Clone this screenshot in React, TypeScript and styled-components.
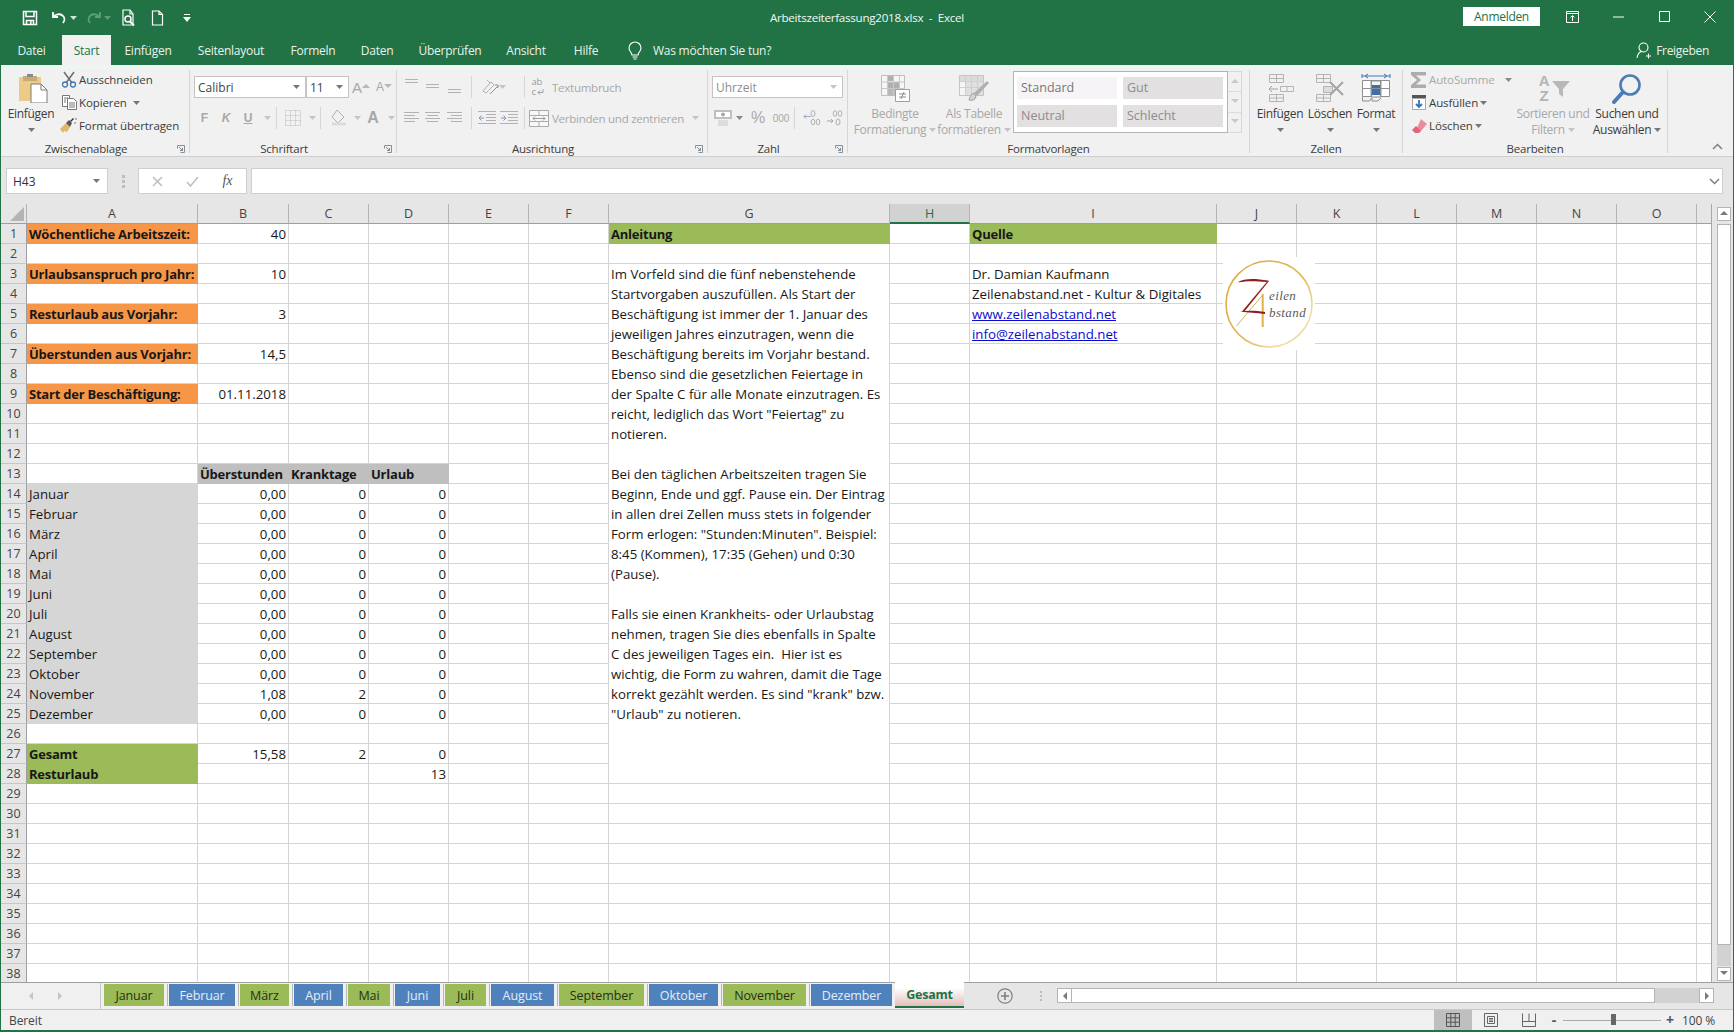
import React from "react";
import styled, { createGlobalStyle } from "styled-components";

const UI = `"Open Sans", "Noto Sans", sans-serif`;
const GREEN = "#217346";
const DIS = "#a8a8a8";

const Global = createGlobalStyle`
  html, body { margin: 0; padding: 0; background: #f0f0f0; overflow: hidden; }
  * { box-sizing: border-box; }
  svg { display: block; flex-shrink: 0; }
`;

const Window = styled.div`
  width: 1734px; height: 1032px; display: flex; flex-direction: column; overflow: hidden;
  border-left: 1px solid ${GREEN}; border-right: 1px solid ${GREEN}; border-bottom: 2px solid ${GREEN};
  font-family: ${UI}; font-size: 11.5px; color: #444; background: #f0f0f0;
`;

/* ---------- title bar ---------- */
const TitleBar = styled.div`
  height: 35px; flex: none; background: ${GREEN}; color: #fff; display: grid; grid-template-columns: 1fr auto 1fr; align-items: center;
`;
const Qat = styled.div`display: flex; align-items: center; padding-left: 20px;`;
const QatSlot = styled.div<{ $w: number; $ml?: number }>`
  width: ${p => p.$w}px; margin-left: ${p => p.$ml || 0}px; display: flex; justify-content: center; align-items: center;
`;
const Title = styled.div`font-size: 11.6px; letter-spacing: -0.25px; color: #f2f7f4;`;
const WinControls = styled.div`display: flex; justify-content: flex-end; align-items: center;`;
const SignIn = styled.div`
  width: 77px; height: 19px; background: #fff; color: ${GREEN}; font-size: 12px; letter-spacing: -0.3px;
  display: flex; align-items: center; justify-content: center; margin-right: 9px; margin-top: -2px;
`;
const WinBtn = styled.div`width: 46px; height: 30px; display: flex; align-items: center; justify-content: center; margin-top: -2px;`;

/* ---------- tabs ---------- */
const TabRow = styled.div`height: 30px; flex: none; background: ${GREEN}; display: flex; align-items: stretch; font-size: 12px;`;
const RibbonTab = styled.div<{ $w: number; $active?: boolean }>`
  width: ${p => p.$w}px; display: flex; align-items: center; justify-content: center; letter-spacing: -0.25px;
  color: ${p => (p.$active ? GREEN : "#eaf2ed")}; background: ${p => (p.$active ? "#f1f1f1" : "transparent")};
`;
const TellMe = styled.div`display: flex; align-items: center; gap: 11px; margin-left: 13px; color: #eaf2ed; letter-spacing: -0.25px;`;
const Share = styled.div`margin-left: auto; margin-right: 24px; display: flex; align-items: center; gap: 4px; color: #eaf2ed; letter-spacing: -0.3px;`;

/* ---------- ribbon ---------- */
const Ribbon = styled.div`
  height: 92px; flex: none; display: flex; padding-top: 5px; border-bottom: 1px solid #cfcfcf; background: linear-gradient(#eef6f1 0, #eef6f1 3px, #f1f1f1 5px);
`;
const Group = styled.div<{ $w: number }>`
  width: ${p => p.$w}px; flex-shrink: 0; height: 83px; border-right: 1px solid #d6d6d6; display: flex; flex-direction: column;
`;
const GroupBody = styled.div<{ $pl?: number }>`height: 71px; flex: none; display: flex; padding-left: ${p => p.$pl || 0}px;`;
const ColumnBody = styled.div<{ $pl?: number }>`
  height: 71px; flex: none; display: flex; flex-direction: column; gap: 9px; padding-top: 6px; padding-left: ${p => p.$pl || 0}px;
`;
const GroupLabel = styled.div`
  height: 16px; flex: none; line-height: 16px; display: flex; color: #3c3c3c; font-size: 11.5px; letter-spacing: -0.2px;
`;
const GroupLabelText = styled.div`flex: 1; text-align: center;`;
const Launcher = styled.div`width: 18px; display: flex; align-items: center; justify-content: flex-end; padding-right: 4px;`;
const BigBtn = styled.div<{ $w: number; $dim?: boolean }>`
  width: ${p => p.$w}px; flex-shrink: 0; display: flex; flex-direction: column; align-items: center; padding-top: 3px; font-size: 12px;
  color: ${p => (p.$dim ? DIS : "#3c3c3c")}; letter-spacing: -0.3px; white-space: nowrap;
`;
const BigIcon = styled.div<{ $ml?: number }>`height: 30px; margin-left: ${p => p.$ml || 0}px; display: flex; align-items: center; justify-content: center; margin-bottom: 3px;`;
const BigLine = styled.div`height: 16px; line-height: 16px; display: flex; align-items: center; gap: 3px;`;
const Stack = styled.div<{ $w: number }>`width: ${p => p.$w}px; flex-shrink: 0; display: flex; flex-direction: column; margin-top: -2px;`;
const SmallBtn = styled.div<{ $dim?: boolean }>`
  height: 23px; display: flex; align-items: center; gap: 2px; white-space: nowrap; letter-spacing: -0.1px;
  color: ${p => (p.$dim ? DIS : "#3c3c3c")};
`;
const SmallIcon = styled.div`width: 16px; display: flex; justify-content: center;`;
const Row = styled.div`height: 22px; display: flex; align-items: center;`;
const Combo = styled.div<{ $w: number; $dim?: boolean }>`
  width: ${p => p.$w}px; height: 22px; background: #fff; border: 1px solid #c4c4c4; display: flex; align-items: center; justify-content: space-between;
  padding: 0 5px 0 3px; color: ${p => (p.$dim ? "#8e8e8e" : "#444")}; flex-shrink: 0; font-size: 12px;
`;
const Slot = styled.div<{ $w: number }>`
  width: ${p => p.$w}px; height: 22px; flex-shrink: 0; display: flex; align-items: center; justify-content: center; color: ${DIS};
`;
const VSep = styled.div<{ $mx?: number }>`width: 1px; height: 22px; background: #d6d6d6; flex-shrink: 0; margin: 0 ${p => p.$mx || 0}px;`;
const FontGlyph = styled.span<{ $size?: number; $weight?: number; $italic?: boolean; $under?: boolean }>`
  font-size: ${p => p.$size || 12}px; font-weight: ${p => p.$weight || 400}; font-style: ${p => (p.$italic ? "italic" : "normal")};
  text-decoration: ${p => (p.$under ? "underline" : "none")}; color: ${DIS}; font-family: "Liberation Sans", sans-serif;
`;
const DimText = styled.span`color: ${DIS}; letter-spacing: -0.25px; white-space: nowrap;`;
const WrapGlyph = styled.div`
  width: 18px; display: flex; flex-direction: column; font-size: 9.5px; line-height: 10px; color: #9c9c9c; padding-left: 2px; letter-spacing: -0.2px;
`;
const WrapLine = styled.div`display: flex; align-items: center; gap: 1px;`;
const SortGlyph = styled.div`width: 34px; height: 30px; display: flex;`;
const SortLetters = styled.div`
  width: 16px; display: flex; flex-direction: column; align-items: center; font: 700 15px/15px "Liberation Sans", sans-serif; color: #b4b4b4;
`;
const FunnelWrap = styled.div`margin-top: 8px;`;
const Gallery = styled.div`
  width: 215px; height: 62px; margin: 1px 0 0 7px; background: #fff; border: 1px solid #b4b4b4; display: grid; grid-template-columns: 100px 100px; grid-template-rows: 22px 22px;
  column-gap: 6px; row-gap: 6px; padding: 5px 0 0 3px; flex-shrink: 0;
`;
const Style = styled.div<{ $light?: boolean; $c?: string }>`
  background: ${p => (p.$light ? "#f6f4f6" : "#e3e0e2")}; color: ${p => p.$c || "#8c8c8c"}; line-height: 22px; padding-left: 4px; font-size: 12.5px;
`;
const GalleryScroll = styled.div`
  width: 14px; height: 62px; margin-top: 1px; border: 1px solid #d8d8d8; border-left: none; display: flex; flex-direction: column; flex-shrink: 0;
`;
const GalleryBtn = styled.div`flex: 1; display: flex; align-items: center; justify-content: center; border-bottom: 1px solid #dcdcdc; &:last-child { border-bottom: none; }`;
const RibbonEnd = styled.div`flex: 1; display: flex; align-items: flex-end; justify-content: flex-end; padding: 0 10px 6px 0;`;

/* ---------- formula bar ---------- */
const FormulaBar = styled.div`height: 47px; flex: none; background: #e6e6e6; display: flex; padding: 11px 10px 10px 5px; align-items: stretch;`;
const NameBox = styled.div`
  width: 102px; background: #fff; border: 1px solid #cfcfcf; display: flex; align-items: center; justify-content: space-between; padding: 0 7px 0 6px; color: #333; font-size: 12px;
`;
const Dots = styled.div`width: 30px; display: flex; align-items: center; justify-content: center;`;
const FxBox = styled.div`
  width: 109px; background: #fff; border: 1px solid #cfcfcf; display: flex; align-items: center; justify-content: space-around; padding: 0 2px;
`;
const FxMark = styled.span`font-family: "Liberation Serif", serif; font-style: italic; font-size: 14px; color: #555;`;
const FormulaInput = styled.div`
  flex: 1; margin-left: 4px; background: #fff; border: 1px solid #cfcfcf; display: flex; align-items: center; justify-content: flex-end; padding-right: 2px;
`;

/* ---------- sheet ---------- */
const SheetRow = styled.div`flex: none; height: 778px; display: flex; background: #e6e6e6;`;
const GridWrap = styled.div`position: relative; width: 1711px; height: 778px; overflow: hidden; border-right: 1px solid #a8a8a8; background: #fff;`;
const Sheet = styled.div`
  display: grid;
  grid-template-columns: 26px 171px 91px 80px 80px 80px 80px 281px 80px 247px 80px 80px 80px 80px 80px 80px 15px;
  grid-template-rows: 20px repeat(38, 20px);
  font-family: ${UI}; font-size: 13.25px; color: #181818;
`;
const Corner = styled.div`background: #e6e6e6; border-right: 1px solid #b4b4b4; border-bottom: 1px solid #9e9e9e; display: flex; align-items: flex-end; justify-content: flex-end; padding: 0 2px 2px 0;`;
const ColHead = styled.div<{ $sel?: boolean }>`
  background: ${p => (p.$sel ? "#d2d2d2" : "#e6e6e6")}; color: ${p => (p.$sel ? GREEN : "#444")};
  border-right: 1px solid #b4b4b4; border-bottom: ${p => (p.$sel ? `2px solid ${GREEN}` : "1px solid #9e9e9e")};
  display: flex; align-items: center; justify-content: center; font-size: 12.5px;
`;
const RowHead = styled.div`
  background: #e6e6e6; color: #444; border-right: 1px solid #9e9e9e; border-bottom: 1px solid #c6c6c6;
  display: flex; align-items: center; justify-content: center; font-size: 12.5px;
`;
const Cell = styled.div<{ $bg?: string; $bold?: boolean; $right?: boolean; $link?: boolean }>`
  background: ${p => p.$bg || "#fff"};
  border-right: 1px solid ${p => p.$bg || "#d4d4d4"}; border-bottom: 1px solid ${p => p.$bg || "#d4d4d4"};
  padding: 0 2px 0 2px; line-height: 20px; white-space: nowrap; overflow: hidden;
  font-weight: ${p => (p.$bold ? 700 : 400)}; text-align: ${p => (p.$right ? "right" : "left")};
  font-size: ${p => (p.$bold ? "13px" : "inherit")}; letter-spacing: ${p => (p.$bold ? "-0.22px" : "0")};
  color: ${p => (p.$link ? "#0b0bcf" : "inherit")}; text-decoration: ${p => (p.$link ? "underline" : "none")};
`;
const Merged = styled.div`
  grid-row: span 26; background: #fff; border-right: 1px solid #d4d4d4; border-bottom: 1px solid #d4d4d4; padding: 0 0 0 2px;
`;
const MergedLine = styled.div`height: 20px; line-height: 20px; white-space: pre;`;
const LogoBox = styled.div`position: absolute; left: 1222px; top: 53px; width: 92px; height: 93px; background: #fff;`;

const VScroll = styled.div`width: 21px; display: flex; flex-direction: column; align-items: center; padding-top: 3px; padding-left: 2px;`;
const ScrollBtn = styled.div`width: 14px; height: 14px; background: #fff; border: 1px solid #b4b4b4; display: flex; align-items: center; justify-content: center; flex-shrink: 0;`;
const VThumb = styled.div`width: 14px; height: 721px; margin: 3px 0 0; background: #fff; border: 1px solid #b4b4b4; flex-shrink: 0;`;
const VTrack = styled.div`flex: 1; width: 14px; background: #d2d2d2; margin-bottom: 1px;`;
const VBottom = styled.div`margin-bottom: 1px;`;

/* ---------- sheet tabs ---------- */
const Strip = styled.div`
  height: 28px; flex: none; display: flex; background: #e6e6e6; border-top: 1px solid #a0a0a0; border-bottom: 1px solid #c8c8c8; padding-top: 1px;
`;
const TabNav = styled.div`width: 100px; display: flex; align-items: center; padding-left: 26px; gap: 21px; background: #f0f0f0; margin-top: -1px; height: 26px; border-right: 1px solid #c8c8c8;`;
const TabList = styled.div`display: flex; padding-left: 3px; background: #f0f0f0; height: 26px; margin-top: -1px; padding-top: 1px;`;
const SheetTab = styled.div<{ $w: number; $blue?: boolean }>`
  width: ${p => p.$w}px; height: 22px; margin-right: 5px; background: ${p => (p.$blue ? "#4f81bd" : "#9bbb59")}; color: ${p => (p.$blue ? "#e4edf7" : "#26300f")};
  display: flex; align-items: center; justify-content: center; box-shadow: 3px 0 0 #f0f0f0, 4px 0 0 #b8b8b8; font-size: 12.5px; letter-spacing: -0.1px;
`;
const ActiveTab = styled.div`
  width: 69px; height: 26px; margin: -2px 0 0 -2px; background: linear-gradient(#fff 25%, #e6bdbd); color: ${GREEN}; font-weight: 700; font-size: 12.5px;
  border-bottom: 2px solid ${GREEN}; display: flex; align-items: center; justify-content: center; letter-spacing: -0.2px;
`;
const AddArea = styled.div`display: flex; align-items: center; height: 24px; margin-left: 33px;`;
const DotsArea = styled.div`display: flex; height: 24px; margin-left: 13px;`;
const HScroll = styled.div`display: flex; margin-left: 1px; margin-top: 4px; height: 15px;`;
const HBtn = styled.div`width: 15px; height: 15px; background: #fff; border: 1px solid #b4b4b4; display: flex; align-items: center; justify-content: center;`;
const HThumb = styled.div`width: 583px; background: #fff; border-top: 1px solid #b4b4b4; border-bottom: 1px solid #b4b4b4; border-right: 1px solid #b4b4b4;`;
const HTrack = styled.div`width: 44px; background: #d2d2d2;`;

/* ---------- status bar ---------- */
const StatusBar = styled.div`flex: 1; min-height: 0; display: flex; align-items: center; background: #f0f0f0; padding-left: 8px; color: #444; letter-spacing: -0.1px; font-size: 12px;`;
const StatusRight = styled.div`margin-left: auto; display: flex; align-items: center; height: 100%;`;
const ViewBtn = styled.div<{ $on?: boolean }>`
  width: 38px; height: 100%; display: flex; align-items: center; justify-content: center; background: ${p => (p.$on ? "#bfbfbf" : "transparent")};
`;
const ZoomMark = styled.div`width: 12px; font-weight: 700; font-size: 14px; color: #555; text-align: center; line-height: 14px;`;
const Slider = styled.div`width: 98px; height: 20px; margin: 0 3px; display: flex; align-items: center; justify-content: center; position: relative;`;
const SliderLine = styled.div`width: 100%; height: 1px; background: #a8a8a8;`;
const SliderThumb = styled.div`position: absolute; width: 5px; height: 11px; background: #666; left: 48px; top: 4px;`;
const ZoomText = styled.div`margin-left: 6px; margin-right: 18px; letter-spacing: -0.1px; color: #444;`;

/* ---------- icons ---------- */
const Caret = ({ c = "#9a9a9a" }: { c?: string }) => (
  <svg width="7" height="4" viewBox="0 0 7 4"><path d="M0 0h7L3.5 4z" fill={c} /></svg>
);
const SaveIcon = () => (
  <svg width="16" height="16" viewBox="0 0 16 16" fill="none" stroke="#fff" strokeWidth="1.5">
    <path d="M1.5 1.5h13v13h-13z" /><path d="M4 1.5v5h8v-5" /><path d="M4.5 14.5v-4h7v4" /><path d="M8.8 11v3" />
  </svg>
);
const UndoIcon = ({ c = "#fff" }: { c?: string }) => (
  <svg width="16" height="14" viewBox="0 0 16 14" fill="none" stroke={c} strokeWidth="1.8">
    <path d="M2 1v5h5" /><path d="M2.5 5.5C5 3 9 2.5 11.5 4.5c2.5 2 2.5 5 .5 7.5" />
  </svg>
);
const RedoIcon = () => (
  <svg width="16" height="14" viewBox="0 0 16 14" fill="none" stroke="#5f9d7c" strokeWidth="1.8">
    <path d="M14 1v5H9" /><path d="M13.5 5.5C11 3 7 2.5 4.5 4.5c-2.5 2-2.5 5-.5 7.5" />
  </svg>
);
const PreviewIcon = () => (
  <svg width="16" height="18" viewBox="0 0 16 18" fill="none" stroke="#fff" strokeWidth="1.2">
    <path d="M9 1H2v15h10V5z" /><path d="M9 1v4h3" />
    <circle cx="7" cy="10" r="3" strokeWidth="1.5" /><path d="M9 12.5l4 4" strokeWidth="2" />
  </svg>
);
const NewIcon = () => (
  <svg width="13" height="16" viewBox="0 0 13 16" fill="none" stroke="#fff" strokeWidth="1.2">
    <path d="M8 1H1.5v14h10V4.5z" /><path d="M8 1v3.5h3.5" />
  </svg>
);
const CustomizeIcon = () => (
  <svg width="8" height="8" viewBox="0 0 8 8" fill="#fff"><path d="M1 0h6v1H1zM0 3h8L4 8z" /></svg>
);
const RibbonDisplayIcon = () => (
  <svg width="13" height="12" viewBox="0 0 13 12" fill="none" stroke="#fff"><path d="M.5.5h12v11H.5zM.5 2.5h12" /><path d="M6.5 10V5M4.5 6.5l2-2 2 2" /></svg>
);
const Bulb = () => (
  <svg width="14" height="19" viewBox="0 0 14 19" fill="none" stroke="#fff" strokeWidth="1.1">
    <path d="M7 1a6 6 0 0 0-6 6c0 2.5 1.5 3.5 2.3 5 .4.8.5 1.5.6 2h6.2c.1-.5.2-1.2.6-2C11.5 10.500 13 9.500 13 7a6 6 0 0 0-6-6z" /><path d="M4.500 16h5M5.500 18h3" />
  </svg>
);
const UserPlus = () => (
  <svg width="16" height="17" viewBox="0 0 16 17" fill="none" stroke="#fff" strokeWidth="1.1">
    <circle cx="7.500" cy="5.500" r="4.500" /><path d="M1 16c.5-3.500 2.500-6 4.500-6.500M10 14h5M12.500 11.500v5" />
  </svg>
);
const PasteIcon = () => (
  <svg width="30" height="30" viewBox="0 0 30 30">
    <path d="M1 4h22v24H1z" fill="#eccb88" />
    <path d="M5 3h14v5H5z" fill="#c7ab74" /><path d="M9 1h6v3H9z" fill="#8a8a8a" />
    <path d="M13 11h10l6 6v13H13z" fill="#fff" stroke="#7a7a7a" /><path d="M23 11v6h6" fill="none" stroke="#7a7a7a" />
  </svg>
);
const ScissorsIcon = () => (
  <svg width="16" height="17" viewBox="0 0 16 17" fill="none">
    <path d="M3 1l8 11M13 1L5 12" stroke="#6d6d6d" strokeWidth="1.5" />
    <circle cx="4" cy="13.500" r="2.500" stroke="#3f78b4" strokeWidth="1.3" /><circle cx="12" cy="13.500" r="2.500" stroke="#3f78b4" strokeWidth="1.3" />
  </svg>
);
const CopyIcon = () => (
  <svg width="15" height="15" viewBox="0 0 15 15" fill="#fff" stroke="#777">
    <path d="M.5.5h7v11h-7z" /><path d="M5.500 3.500h6l3 3v8h-9z" /><path d="M7 8h6M7 10h6M7 12h6M2 3h4M2 5h2M2 7h2" fill="none" />
  </svg>
);
const BrushIcon = () => (
  <svg width="18" height="15" viewBox="0 0 18 15">
    <path d="M0 11l6-6 4 4-3 5-3-1-1 2z" fill="#e2b76a" /><path d="M6 5l3-3 3 3-2 4z" fill="#5a5a5a" /><path d="M10 3l3-3 1 1-3 3z" fill="#333" />
    <path d="M15 1l1 1 1-1-1-1zM14 5l1 1 1-1-1-1z" fill="#777" />
  </svg>
);
const Launch = () => (
  <svg width="8" height="8" viewBox="0 0 8 8" fill="none" stroke="#8e8e8e"><path d="M.5 3.500V.5h7v7H3.500" /><path d="M2 2l3.500 3.500M3 5.500h2.500V3" stroke="#7a8ea0" /></svg>
);
const LineStack = ({ off, align }: { off: number; align: "l" | "c" | "r" | "n" }) => {
  const ls = align === "n"
    ? [[0, 13], [0, 13]]
    : align === "l" ? [[0, 15], [0, 11], [0, 15], [0, 11]]
    : align === "c" ? [[0, 15], [2, 13], [0, 15], [2, 13]]
    : [[0, 15], [4, 15], [0, 15], [4, 15]];
  return (
    <svg width="16" height="18" viewBox="0 0 16 18" stroke="#b2b2b2">
      {ls.map((l, i) => <path key={i} d={`M${l[0] + (align === "n" ? 1 : 0)} ${off + i * 3 + 0.5}H${l[1] + (align === "n" ? 1 : 0)}`} />)}
    </svg>
  );
};
const OrientIcon = () => (
  <svg width="17" height="17" viewBox="0 0 17 17" fill="none" stroke="#b0b0b0"><path d="M1 12L9 3l3 3-8 8zM5 1l3 3" /><path d="M8 15l8-8M13 6h3v3" stroke="#8f8f8f" /></svg>
);
const IndentIcon = ({ dir }: { dir: "l" | "r" }) => (
  <svg width="19" height="14" viewBox="0 0 19 14" fill="none" stroke="#b2b2b2">
    <path d="M0 .5h18M8 3.500h10M8 6.500h10M8 9.500h10M0 12.500h18" />
    <path d={dir === "l" ? "M6 7H1M3.500 4.500L1 7l2.500 2.500" : "M1 7h5M3.500 4.500L6 7 3.500 9.500"} stroke="#7c9bbc" />
  </svg>
);
const MergeIcon = () => (
  <svg width="20" height="17" viewBox="0 0 20 17" fill="#f8f8f8" stroke="#ababab"><path d="M.5.5h19v16H.5z" /><path d="M.5 5.500h19M.5 11.500h19M10 .5v5M10 11.500v5" fill="none" /><path d="M4 8.500h12M6 6.500l-2 2 2 2M14 6.500l2 2-2 2" fill="none" stroke="#9b9b9b" /></svg>
);
const MoneyIcon = () => (
  <svg width="18" height="17" viewBox="0 0 18 17"><path d="M0 0h18v9H0z" fill="#bfbfbf" /><path d="M2 2h14v5H2z" fill="#fff" /><circle cx="9" cy="4.500" r="2" fill="#a8a8a8" /><path d="M4 11h10M4 13h10M4 15h10" stroke="#c8c8c8" /></svg>
);
const DecIcon = ({ more }: { more?: boolean }) => (
  <svg width="18" height="16" viewBox="0 0 18 16" fill="none" stroke="#a8a8a8" strokeWidth="0.9">
    {more ? (
      <><path d="M1 6.500h6M3 4.500l-2 2 2 2" stroke="#8aa4bd" /><ellipse cx="10" cy="3.500" rx="2" ry="3" /><path d="M7.500 6v.9" /><ellipse cx="10" cy="12" rx="1.800" ry="2.800" /><ellipse cx="15" cy="12" rx="1.800" ry="2.800" /></>
    ) : (
      <><ellipse cx="9" cy="3.500" rx="1.800" ry="2.800" /><ellipse cx="14" cy="3.500" rx="1.800" ry="2.800" /><path d="M1 11h6M5 9l2 2-2 2" stroke="#8aa4bd" /><ellipse cx="12" cy="12" rx="2" ry="3" /></>
    )}
  </svg>
);
const CondIcon = () => (
  <svg width="29" height="27" viewBox="0 0 29 27">
    <path d="M.5.5h23v20H.5z" fill="#f6f6f6" stroke="#bdbdbd" />
    <path d="M7 1h5v5H7z" fill="#b0b0b0" /><path d="M7 7h11v6H7z" fill="#b0b0b0" /><path d="M7 14h8v6H7z" fill="#b8b8b8" />
    <path d="M.5 7h23M.5 13.500h23M6.500.5v20M12.500.5v20M18.500.5v20" stroke="#c8c8c8" fill="none" />
    <path d="M14.500 14.500h14v12h-14z" fill="#fff" stroke="#a0a0a0" /><path d="M18 19h7M18 22h7M23 17l-3 7" stroke="#8f8f8f" fill="none" />
  </svg>
);
const TableIcon = () => (
  <svg width="30" height="27" viewBox="0 0 30 27">
    <path d="M.5.5h24v20H.5z" fill="#f6f6f6" stroke="#c4c4c4" />
    <path d="M1 1h23v5H1z" fill="#dcdcdc" /><path d="M7 7h17v13H7z" fill="#e0e0e0" />
    <path d="M.5 6.500h24M.5 12.500h24M6.500.5v20M12.500.5v20M18.500.5v20" stroke="#cfcfcf" fill="none" />
    <path d="M28 6l2 2-12 13-3-3z" fill="#b0b0b0" /><path d="M15 18c-3 1-4 3-5 7 3 1 6 0 7-3z" fill="#d2d2d2" stroke="#a0a0a0" />
  </svg>
);
const InsertIcon = () => (
  <svg width="28" height="28" viewBox="0 0 28 28" fill="none" stroke="#b4b4b4">
    <path d="M3.500.5h14v8h-14zM10.500.5v8M3.500 4.500h14" /><path d="M14.500 12.500h13v5h-13zM21 12.500v5" />
    <path d="M3 15h9M6 12l-3 3 3 3" stroke="#a0a0a0" />
    <path d="M3.500 20.500h14v7h-14zM10.500 20.500v7M3.500 24h14" />
  </svg>
);
const DeleteIcon = () => (
  <svg width="30" height="28" viewBox="0 0 30 28" fill="none" stroke="#b4b4b4">
    <path d="M1.500.5h14v8h-14zM8.500.5v8M1.500 4.500h14" /><path d="M8.500 12.500h9v6h-9z" fill="#dcdcdc" />
    <path d="M1.500 20.500h14v7h-14zM8.500 20.500v7M1.500 24h14" />
    <path d="M15 8l13 13M28 8L15 21" stroke="#a4a4a4" strokeWidth="2" />
  </svg>
);
const FormatIcon = () => (
  <svg width="30" height="30" viewBox="0 0 30 30" fill="none" stroke="#8f8f8f">
    <path d="M1 3h28M1 1v4M29 1v4" stroke="#3f78b4" />
    <path d="M4 3l3-2M4 3l3 2M26 3l-3-2M26 3l-3 2" stroke="#3f78b4" />
    <path d="M1.500 7.500h27v16h-27z" fill="#fff" /><path d="M10 8h10v16H10z" fill="#f4f4f4" />
    <path d="M11 12h8v10h-8z" fill="#3f6fa8" stroke="none" />
    <path d="M1.500 15.500h27M10.500 7.500v16M19.500 7.500v16" />
    <path d="M1.500 24v4h7l2-3M11 25v3h6l3-3" />
  </svg>
);
const SigmaIcon = () => (
  <svg width="16" height="16" viewBox="0 0 16 16"><path d="M0 0h15v3.500H5L10 8l-5 4.500h10V16H0v-3l6-5-6-5z" fill="#adadad" /></svg>
);
const FillIcon = () => (
  <svg width="14" height="15" viewBox="0 0 14 15"><path d="M0 0h14v3H0z" fill="#555" /><path d="M.5 3.500h13v11H.5z" fill="#fff" stroke="#a8a8a8" /><path d="M7 5v7M4 9l3 3 3-3" stroke="#2e75b6" strokeWidth="1.800" fill="none" /></svg>
);
const EraserIcon = () => (
  <svg width="15" height="14" viewBox="0 0 15 14"><path d="M9 0l6 5-6 7-5-1z" fill="#e88da0" /><path d="M4 7l5 5-2 2H3L0 11z" fill="#e0647c" /></svg>
);
const Funnel = () => (
  <svg width="18" height="16" viewBox="0 0 18 16"><path d="M0 0h18l-7 8v8l-4-3V8z" fill="#b8b8b8" /></svg>
);
const SearchIcon = () => (
  <svg width="30" height="31" viewBox="0 0 30 31" fill="none">
    <circle cx="18" cy="12" r="9.500" stroke="#4a7cb5" strokeWidth="2.600" />
    <path d="M11 19L2 29" stroke="#4a7cb5" strokeWidth="4" strokeLinecap="round" />
  </svg>
);
const Chevron = ({ up }: { up?: boolean }) => (
  <svg width="11" height="7" viewBox="0 0 11 7" fill="none" stroke="#7f7f7f" strokeWidth="1.500"><path d={up ? "M1 6l4.500-4.500L10 6" : "M1 1l4.500 4.500L10 1"} /></svg>
);
const Tri = ({ dir, c = "#7a7a7a" }: { dir: "u" | "d" | "l" | "r"; c?: string }) => {
  const d = { u: "M0 5L4 1l4 4z", d: "M0 1l4 4 4-4z", l: "M6 0v8L2 4z", r: "M2 0v8l4-4z" }[dir];
  return <svg width="8" height="8" viewBox="0 0 8 8"><path d={d} fill={c} /></svg>;
};
const CornerTri = () => (
  <svg width="14" height="14" viewBox="0 0 14 14"><path d="M14 0v14H0z" fill="#b4b4b4" /></svg>
);
const Logo = () => (
  <svg width="92" height="93" viewBox="0 0 92 93" fill="none">
    <defs>
      <linearGradient id="ring" x1="0" y1="0" x2="1" y2="1">
        <stop offset="0" stopColor="#d9a93a" /><stop offset="0.55" stopColor="#e2b95a" /><stop offset="0.82" stopColor="#f2dfb0" /><stop offset="1" stopColor="#e2b95a" />
      </linearGradient>
    </defs>
    <circle cx="46" cy="47" r="43" stroke="url(#ring)" strokeWidth="1.600" />
    <path d="M39.700 37v33" stroke="#e0b24a" strokeWidth="2" />
    <path d="M39.700 38L13.500 69" stroke="#e0b24a" strokeWidth="1" />
    <path d="M15 25c6-4 18-3.500 30-1.500l-1 1.500c-10-.8-16-1-22-.4-3 .3-5 1-7 .4z" fill="#8f1d1d" />
    <path d="M45 23.500L19 54.500l2 .5L46 24z" fill="#8f1d1d" />
    <path d="M17 54.500c8-1.200 17-.6 25 .5v2c-9-1-16-1.200-25-2.500z" fill="#8f1d1d" />
    <text x="46" y="42.500" fontFamily="Liberation Serif" fontStyle="italic" fontSize="13" letterSpacing="0.4" fill="#5c5c5c">eilen</text>
    <text x="46" y="60" fontFamily="Liberation Serif" fontStyle="italic" fontSize="13" letterSpacing="0.4" fill="#5c5c5c">bstand</text>
  </svg>
);

/* ---------- data ---------- */
const COLS = ["A", "B", "C", "D", "E", "F", "G", "H", "I", "J", "K", "L", "M", "N", "O", ""];
const ORANGE = "#f79646";
const LIME = "#9bbb59";
const GREY = "#d6d6d6";
const DGREY = "#bfbfbf";
type CellData = { t?: string; bg?: string; bold?: boolean; right?: boolean; link?: boolean };
const data: Record<string, CellData> = {
  A1: { t: "Wöchentliche Arbeitszeit:", bg: ORANGE, bold: true }, B1: { t: "40", right: true },
  A3: { t: "Urlaubsanspruch pro Jahr:", bg: ORANGE, bold: true }, B3: { t: "10", right: true },
  A5: { t: "Resturlaub aus Vorjahr:", bg: ORANGE, bold: true }, B5: { t: "3", right: true },
  A7: { t: "Überstunden aus Vorjahr:", bg: ORANGE, bold: true }, B7: { t: "14,5", right: true },
  A9: { t: "Start der Beschäftigung:", bg: ORANGE, bold: true }, B9: { t: "01.11.2018", right: true },
  B13: { t: "Überstunden", bg: DGREY, bold: true }, C13: { t: "Kranktage", bg: DGREY, bold: true }, D13: { t: "Urlaub", bg: DGREY, bold: true },
  A27: { t: "Gesamt", bg: LIME, bold: true }, B27: { t: "15,58", right: true }, C27: { t: "2", right: true }, D27: { t: "0", right: true },
  A28: { t: "Resturlaub", bg: LIME, bold: true }, D28: { t: "13", right: true },
  G1: { t: "Anleitung", bg: LIME, bold: true }, I1: { t: "Quelle", bg: LIME, bold: true },
  I3: { t: "Dr. Damian Kaufmann" }, I4: { t: "Zeilenabstand.net - Kultur & Digitales" },
  I5: { t: "www.zeilenabstand.net", link: true }, I6: { t: "info@zeilenabstand.net", link: true },
};
["Januar", "Februar", "März", "April", "Mai", "Juni", "Juli", "August", "September", "Oktober", "November", "Dezember"].forEach((m, i) => {
  const r = 14 + i;
  const nov = m === "November";
  data[`A${r}`] = { t: m, bg: GREY };
  data[`B${r}`] = { t: nov ? "1,08" : "0,00", right: true };
  data[`C${r}`] = { t: nov ? "2" : "0", right: true };
  data[`D${r}`] = { t: "0", right: true };
});
const notes = [
  "Im Vorfeld sind die fünf nebenstehende", "Startvorgaben auszufüllen. Als Start der", "Beschäftigung ist immer der 1. Januar des",
  "jeweiligen Jahres einzutragen, wenn die", "Beschäftigung bereits im Vorjahr bestand.", "Ebenso sind die gesetzlichen Feiertage in",
  "der Spalte C für alle Monate einzutragen. Es", "reicht, lediglich das Wort \"Feiertag\" zu", "notieren.", " ",
  "Bei den täglichen Arbeitszeiten tragen Sie", "Beginn, Ende und ggf. Pause ein. Der Eintrag", "in allen drei Zellen muss stets in folgender",
  "Form erlogen: \"Stunden:Minuten\". Beispiel:", "8:45 (Kommen), 17:35 (Gehen) und 0:30", "(Pause).", " ",
  "Falls sie einen Krankheits- oder Urlaubstag", "nehmen, tragen Sie dies ebenfalls in Spalte", "C des jeweiligen Tages ein.  Hier ist es",
  "wichtig, die Form zu wahren, damit die Tage", "korrekt gezählt werden. Es sind \"krank\" bzw.", "\"Urlaub\" zu notieren.",
];
const tabs = [
  ["Januar", 60, 0], ["Februar", 66, 1], ["März", 49, 0], ["April", 49, 1], ["Mai", 42, 0], ["Juni", 45, 1], ["Juli", 41, 0],
  ["August", 63, 1], ["September", 85, 0], ["Oktober", 69, 1], ["November", 83, 0], ["Dezember", 81, 1],
] as const;
const ribbonTabs: [string, number][] = [["Datei", 61], ["Start", 49], ["Einfügen", 74], ["Seitenlayout", 92], ["Formeln", 72], ["Daten", 56], ["Überprüfen", 90], ["Ansicht", 62], ["Hilfe", 58]];

const renderRow = (r: number) => {
  const out: React.ReactNode[] = [<RowHead key={`h${r}`}>{r}</RowHead>];
  COLS.forEach(c => {
    const k = `${c || "P"}${r}`;
    if (c === "G" && r === 3) {
      out.push(<Merged key={k}>{notes.map((n, j) => <MergedLine key={j}>{n}</MergedLine>)}</Merged>);
      return;
    }
    if (c === "G" && r > 3 && r <= 28) return;
    const d = data[k] || {};
    out.push(<Cell key={k} $bg={d.bg} $bold={d.bold} $right={d.right} $link={d.link}>{d.t}</Cell>);
  });
  return out;
};

export default function App() {
  return (
    <Window>
      <Global />
      <TitleBar>
        <Qat>
          <QatSlot $w={18}><SaveIcon /></QatSlot>
          <QatSlot $w={16} $ml={12}><UndoIcon /></QatSlot>
          <QatSlot $w={12}><Caret c="#cfe3d8" /></QatSlot>
          <QatSlot $w={16} $ml={7}><RedoIcon /></QatSlot>
          <QatSlot $w={10}><Caret c="#5f9d7c" /></QatSlot>
          <QatSlot $w={16} $ml={9}><PreviewIcon /></QatSlot>
          <QatSlot $w={16} $ml={12}><NewIcon /></QatSlot>
          <QatSlot $w={16} $ml={14}><CustomizeIcon /></QatSlot>
        </Qat>
        <Title>Arbeitszeiterfassung2018.xlsx&nbsp; -&nbsp; Excel</Title>
        <WinControls>
          <SignIn>Anmelden</SignIn>
          <WinBtn><RibbonDisplayIcon /></WinBtn>
          <WinBtn><svg width="11" height="2" viewBox="0 0 11 2"><path d="M0 1h11" stroke="#fff" /></svg></WinBtn>
          <WinBtn><svg width="11" height="11" viewBox="0 0 11 11"><path d="M.5.5h10v10H.5z" stroke="#fff" fill="none" /></svg></WinBtn>
          <WinBtn><svg width="12" height="12" viewBox="0 0 12 12"><path d="M.5.5l11 11M11.500.5l-11 11" stroke="#fff" /></svg></WinBtn>
        </WinControls>
      </TitleBar>

      <TabRow>
        {ribbonTabs.map(([t, w]) => <RibbonTab key={t} $w={w} $active={t === "Start"}>{t}</RibbonTab>)}
        <TellMe><Bulb />Was möchten Sie tun?</TellMe>
        <Share><UserPlus />Freigeben</Share>
      </TabRow>

      <Ribbon>
        <Group $w={189}>
          <GroupBody>
            <BigBtn $w={60}>
              <BigIcon $ml={3}><PasteIcon /></BigIcon>
              <BigLine>Einfügen</BigLine>
              <BigLine><Caret c="#777" /></BigLine>
            </BigBtn>
            <Stack $w={128}>
              <SmallBtn><SmallIcon><ScissorsIcon /></SmallIcon>Ausschneiden</SmallBtn>
              <SmallBtn><SmallIcon><CopyIcon /></SmallIcon>Kopieren<Slot $w={16}><Caret c="#777" /></Slot></SmallBtn>
              <SmallBtn><SmallIcon><BrushIcon /></SmallIcon>Format übertragen</SmallBtn>
            </Stack>
          </GroupBody>
          <GroupLabel><GroupLabelText>Zwischenablage</GroupLabelText><Launcher><Launch /></Launcher></GroupLabel>
        </Group>

        <Group $w={207}>
          <ColumnBody $pl={4}>
            <Row>
              <Combo $w={112}>Calibri<Caret c="#777" /></Combo>
              <Combo $w={43}>11<Caret c="#777" /></Combo>
              <Slot $w={24}><FontGlyph $size={15}>A</FontGlyph><Tri dir="u" c="#b8b8b8" /></Slot>
              <Slot $w={22}><FontGlyph $size={12}>A</FontGlyph><Tri dir="d" c="#b8b8b8" /></Slot>
            </Row>
            <Row>
              <Slot $w={21}><FontGlyph $weight={700}>F</FontGlyph></Slot>
              <Slot $w={22}><FontGlyph $weight={700} $italic>K</FontGlyph></Slot>
              <Slot $w={22}><FontGlyph $weight={700} $under>U</FontGlyph></Slot>
              <Slot $w={16}><Caret c="#c4c4c4" /></Slot>
              <VSep $mx={1} />
              <Slot $w={30}><svg width="16" height="16" viewBox="0 0 16 16" fill="none" stroke="#bdbdbd" strokeDasharray="1 1"><path d="M.5.5h15v15H.5zM.5 5.500h15M.5 10.500h15M5.500.5v15M10.500.5v15" /></svg></Slot>
              <Slot $w={8}><Caret c="#c4c4c4" /></Slot>
              <VSep $mx={4} />
              <Slot $w={27}><svg width="18" height="18" viewBox="0 0 18 18" fill="none" stroke="#b0b0b0"><path d="M7 1l7 7-6 6-6-6z" /><path d="M2 15h14" stroke="#dcdcdc" strokeWidth="3" /></svg></Slot>
              <Slot $w={10}><Caret c="#c4c4c4" /></Slot>
              <Slot $w={22}><FontGlyph $size={16} $weight={700}>A</FontGlyph></Slot>
              <Slot $w={14}><Caret c="#c4c4c4" /></Slot>
            </Row>
          </ColumnBody>
          <GroupLabel><GroupLabelText>Schriftart</GroupLabelText><Launcher><Launch /></Launcher></GroupLabel>
        </Group>

        <Group $w={311}>
          <ColumnBody $pl={5}>
            <Row>
              <Slot $w={20}><LineStack off={1} align="n" /></Slot>
              <Slot $w={21}><LineStack off={6} align="n" /></Slot>
              <Slot $w={23}><LineStack off={11} align="n" /></Slot>
              <VSep $mx={5} />
              <Slot $w={33}><OrientIcon /><Caret c="#c4c4c4" /></Slot>
              <Slot $w={14} />
              <VSep />
              <Slot $w={27}>
                <WrapGlyph>
                  <div>ab</div>
                  <WrapLine>c<svg width="7" height="6" viewBox="0 0 7 6" fill="none" stroke="#a0a0a0"><path d="M6 0v3.500H1M3 1.500L1 3.500l2 2" /></svg></WrapLine>
                </WrapGlyph>
              </Slot>
              <DimText>Textumbruch</DimText>
            </Row>
            <Row>
              <Slot $w={20}><LineStack off={3} align="l" /></Slot>
              <Slot $w={21}><LineStack off={3} align="c" /></Slot>
              <Slot $w={23}><LineStack off={3} align="r" /></Slot>
              <VSep $mx={5} />
              <Slot $w={1} />
              <Slot $w={19}><IndentIcon dir="l" /></Slot>
              <Slot $w={3} />
              <Slot $w={19}><IndentIcon dir="r" /></Slot>
              <Slot $w={5} />
              <VSep />
              <Slot $w={27}><MergeIcon /></Slot>
              <DimText>Verbinden und zentrieren</DimText>
              <Slot $w={24}><Caret c="#c4c4c4" /></Slot>
            </Row>
          </ColumnBody>
          <GroupLabel><GroupLabelText>Ausrichtung</GroupLabelText><Launcher><Launch /></Launcher></GroupLabel>
        </Group>

        <Group $w={140}>
          <ColumnBody $pl={4}>
            <Row><Combo $w={131} $dim>Uhrzeit<Caret c="#c4c4c4" /></Combo></Row>
            <Row>
              <Slot $w={21}><MoneyIcon /></Slot>
              <Slot $w={12}><Caret c="#8a8a8a" /></Slot>
              <Slot $w={26}><FontGlyph $size={16}>%</FontGlyph></Slot>
              <Slot $w={20}><FontGlyph $size={10}>000</FontGlyph></Slot>
              <VSep $mx={3} />
              <Slot $w={28}><DecIcon more /></Slot>
              <Slot $w={18}><DecIcon /></Slot>
            </Row>
          </ColumnBody>
          <GroupLabel><GroupLabelText>Zahl</GroupLabelText><Launcher><Launch /></Launcher></GroupLabel>
        </Group>

        <Group $w={402}>
          <GroupBody>
            <BigBtn $w={94} $dim>
              <BigIcon><CondIcon /></BigIcon>
              <BigLine>Bedingte</BigLine>
              <BigLine>Formatierung<Caret c="#c4c4c4" /></BigLine>
            </BigBtn>
            <BigBtn $w={64} $dim>
              <BigIcon><TableIcon /></BigIcon>
              <BigLine>Als Tabelle</BigLine>
              <BigLine>formatieren<Caret c="#c4c4c4" /></BigLine>
            </BigBtn>
            <Gallery>
              <Style $light $c="#777">Standard</Style>
              <Style>Gut</Style>
              <Style>Neutral</Style>
              <Style>Schlecht</Style>
            </Gallery>
            <GalleryScroll>
              <GalleryBtn><Tri dir="u" c="#c8c8c8" /></GalleryBtn>
              <GalleryBtn><Tri dir="d" c="#c8c8c8" /></GalleryBtn>
              <GalleryBtn><Tri dir="d" c="#c8c8c8" /></GalleryBtn>
            </GalleryScroll>
          </GroupBody>
          <GroupLabel><GroupLabelText>Formatvorlagen</GroupLabelText></GroupLabel>
        </Group>

        <Group $w={153}>
          <GroupBody>
            <BigBtn $w={60}>
              <BigIcon><InsertIcon /></BigIcon>
              <BigLine>Einfügen</BigLine>
              <BigLine><Caret c="#777" /></BigLine>
            </BigBtn>
            <BigBtn $w={40}>
              <BigIcon><DeleteIcon /></BigIcon>
              <BigLine>Löschen</BigLine>
              <BigLine><Caret c="#777" /></BigLine>
            </BigBtn>
            <BigBtn $w={52}>
              <BigIcon><FormatIcon /></BigIcon>
              <BigLine>Format</BigLine>
              <BigLine><Caret c="#777" /></BigLine>
            </BigBtn>
          </GroupBody>
          <GroupLabel><GroupLabelText>Zellen</GroupLabelText></GroupLabel>
        </Group>

        <Group $w={265}>
          <GroupBody $pl={8}>
            <Stack $w={115}>
              <SmallBtn $dim><SmallIcon><SigmaIcon /></SmallIcon>AutoSumme<Slot $w={24}><Caret c="#8a8a8a" /></Slot></SmallBtn>
              <SmallBtn><SmallIcon><FillIcon /></SmallIcon>Ausfüllen<Caret c="#777" /></SmallBtn>
              <SmallBtn><SmallIcon><EraserIcon /></SmallIcon>Löschen<Caret c="#777" /></SmallBtn>
            </Stack>
            <BigBtn $w={54} $dim>
              <BigIcon>
                <SortGlyph>
                  <SortLetters><div>A</div><div>Z</div></SortLetters>
                  <FunnelWrap><Funnel /></FunnelWrap>
                </SortGlyph>
              </BigIcon>
              <BigLine>Sortieren und</BigLine>
              <BigLine>Filtern<Caret c="#c4c4c4" /></BigLine>
            </BigBtn>
            <BigBtn $w={94}>
              <BigIcon><SearchIcon /></BigIcon>
              <BigLine>Suchen und</BigLine>
              <BigLine>Auswählen<Caret c="#777" /></BigLine>
            </BigBtn>
          </GroupBody>
          <GroupLabel><GroupLabelText>Bearbeiten</GroupLabelText></GroupLabel>
        </Group>

        <RibbonEnd><Chevron up /></RibbonEnd>
      </Ribbon>

      <FormulaBar>
        <NameBox>H43<Caret c="#777" /></NameBox>
        <Dots><svg width="3" height="13" viewBox="0 0 3 13" fill="#bdbdbd"><path d="M0 0h3v3H0zM0 5h3v3H0zM0 10h3v3H0z" /></svg></Dots>
        <FxBox>
          <svg width="11" height="11" viewBox="0 0 11 11" stroke="#bdbdbd" strokeWidth="1.500"><path d="M1 1l9 9M10 1l-9 9" /></svg>
          <svg width="13" height="11" viewBox="0 0 13 11" fill="none" stroke="#bdbdbd" strokeWidth="1.500"><path d="M1 6l3.500 4L12 1" /></svg>
          <FxMark>fx</FxMark>
        </FxBox>
        <FormulaInput><Chevron /></FormulaInput>
      </FormulaBar>

      <SheetRow>
        <GridWrap>
          <Sheet>
            <Corner><CornerTri /></Corner>
            {COLS.map((c, i) => <ColHead key={i} $sel={c === "H"}>{c}</ColHead>)}
            {Array.from({ length: 38 }, (_, i) => renderRow(i + 1))}
          </Sheet>
          <LogoBox><Logo /></LogoBox>
        </GridWrap>
        <VScroll>
          <ScrollBtn><Tri dir="u" /></ScrollBtn>
          <VThumb />
          <VTrack />
          <VBottom><ScrollBtn><Tri dir="d" /></ScrollBtn></VBottom>
        </VScroll>
      </SheetRow>

      <Strip>
        <TabNav><Tri dir="l" c="#c4c4c4" /><Tri dir="r" c="#c4c4c4" /></TabNav>
        <TabList>
          {tabs.map(([t, w, blue]) => <SheetTab key={t} $w={w} $blue={!!blue}>{t}</SheetTab>)}
          <ActiveTab>Gesamt</ActiveTab>
        </TabList>
        <AddArea>
          <svg width="16" height="16" viewBox="0 0 16 16" fill="none" stroke="#7f7f7f"><circle cx="8" cy="8" r="7.200" strokeWidth="1.200" /><path d="M8 4v8M4 8h8" strokeWidth="1.600" /></svg>
        </AddArea>
        <DotsArea><Dots><svg width="3" height="11" viewBox="0 0 3 11" fill="#bdbdbd"><path d="M0 0h2v2H0zM0 4h2v2H0zM0 8h2v2H0z" /></svg></Dots></DotsArea>
        <HScroll>
          <HBtn><Tri dir="l" /></HBtn>
          <HThumb />
          <HTrack />
          <HBtn><Tri dir="r" /></HBtn>
        </HScroll>
      </Strip>

      <StatusBar>
        Bereit
        <StatusRight>
          <ViewBtn $on><svg width="14" height="14" viewBox="0 0 14 14" fill="none" stroke="#555"><path d="M.5.5h13v13H.5zM.5 4.800h13M.5 9.200h13M4.800.5v13M9.200.5v13" /></svg></ViewBtn>
          <ViewBtn><svg width="14" height="14" viewBox="0 0 14 14" fill="none" stroke="#666"><path d="M.5.5h13v13H.5zM3.500 3.500h7v7h-7zM5 5.500h4M5 7h4M5 8.500h4" /></svg></ViewBtn>
          <ViewBtn><svg width="14" height="14" viewBox="0 0 14 14" fill="none" stroke="#666"><path d="M.5.500v13h13V.5M.5 8.500h13M7 .5v8" /></svg></ViewBtn>
          <ZoomMark>-</ZoomMark>
          <Slider><SliderLine /><SliderThumb /></Slider>
          <ZoomMark>+</ZoomMark>
          <ZoomText>100 %</ZoomText>
        </StatusRight>
      </StatusBar>
    </Window>
  );
}
